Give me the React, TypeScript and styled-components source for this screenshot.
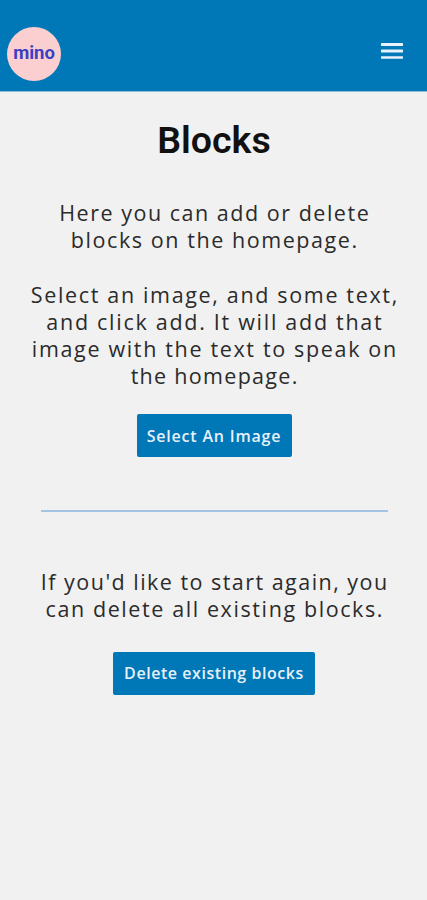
import React, { FunctionComponent } from 'react'
import styled, { createGlobalStyle } from 'styled-components'

const GlobalStyle = createGlobalStyle`
  * {
    box-sizing:border-box;
  }
  body {
    margin:0;
    background:#f1f1f1;
  }
`

const Page = styled.div`
  min-height:900px;
  background:#f1f1f1;
  color:#111;
  font-family:'Open Sans', sans-serif;
`

const Header = styled.header`
  height: 92px;
  display:flex;
  justify-content:space-between;
  align-items:flex-start;
  padding:27px 24px 0 7px;
  background:#0077b6;
  border-bottom:1px solid #8dbfdc;
`

const Logo = styled.div`
  width:54px;
  height:54px;
  border-radius:50%;
  background:#fbcfd0;
  color:#3a3fc4;
  font-family:Roboto, sans-serif;
  font-size:18.5px;
  font-weight:700;
  line-height:52px;
  text-align:center;
`

const MenuButton = styled.button`
  display:block;
  margin-top:16px;
  padding:0;
  border:0;
  background:none;
  line-height:0;
`

const Main = styled.main`
  display:flex;
  flex-direction:column;
  align-items:center;
  padding-left:1px;
`

const Title = styled.h1`
  margin:25px 0 0;
  font-family:Roboto, sans-serif;
  font-size:37.5px;
  font-weight:600;
  line-height:46px;
`

const Paragraph = styled.p<{ $top: number }>`
  margin:${({ $top }) => $top}px 0 0;
  color:#2b2b2b;
  font-size:21.5px;
  font-weight:400;
  line-height:27.2px;
  text-align:center;
  white-space:nowrap;
`

const Line = styled.span<{ $spacing: number }>`
  display:block;
  padding-left:${({ $spacing }) => $spacing}px;
  letter-spacing:${({ $spacing }) => $spacing}px;
`

const Button = styled.button<{ $width: number, $top: number, $spacing: number }>`
  width:${({ $width }) => $width}px;
  height:43px;
  margin:${({ $top }) => $top}px 0 0;
  padding:0;
  border:0;
  border-radius:2px;
  background:#0077b6;
  color:#e6f1fb;
  font-family:'Open Sans', sans-serif;
  font-size:16px;
  font-weight:600;
  letter-spacing:${({ $spacing }) => $spacing}px;
  white-space:nowrap;
`

const Divider = styled.hr`
  width:347px;
  height:2px;
  margin:53px 0 0;
  border:0;
  background:#a3c5e3;
`

type TextLine = {
  text: string,
  spacing: number
}
interface TextBlockProps {
  lines: TextLine[],
  top: number
}

const intro: TextLine[] = [
  { text: 'Here you can add or delete', spacing: 1.52 },
  { text: 'blocks on the homepage.', spacing: 1.57 },
]

const instructions: TextLine[] = [
  { text: 'Select an image, and some text,', spacing: 1.66 },
  { text: 'and click add. It will add that', spacing: 1.72 },
  { text: 'image with the text to speak on', spacing: 1.66 },
  { text: 'the homepage.', spacing: 1.3 },
]

const restart: TextLine[] = [
  { text: 'If you\'d like to start again, you', spacing: 1.47 },
  { text: 'can delete all existing blocks.', spacing: 1.6 },
]

const TextBlock: FunctionComponent<TextBlockProps> = ({ lines, top }) => (
  <Paragraph $top={top}>
    {lines.map(({ text, spacing }) => (
      <Line key={text} $spacing={spacing}>{text}</Line>
    ))}
  </Paragraph>
)

const App: FunctionComponent = () => (
  <Page>
    <GlobalStyle />
    <Header>
      <Logo>mino</Logo>
      <MenuButton aria-label="Menu">
        <svg width="22" height="16" viewBox="0 0 22 16" fill="#e8f1fc">
          <rect width="22" height="3" rx="0.5" />
          <rect y="6.5" width="22" height="3" rx="0.5" />
          <rect y="13.2" width="22" height="2.6" rx="0.5" />
        </svg>
      </MenuButton>
    </Header>
    <Main>
      <Title>Blocks</Title>
      <TextBlock lines={intro} top={36} />
      <TextBlock lines={instructions} top={27.4} />
      <Button $width={155} $top={24.4} $spacing={0.8}>Select An Image</Button>
      <Divider />
      <TextBlock lines={restart} top={56} />
      <Button $width={202} $top={29.2} $spacing={0.55}>Delete existing blocks</Button>
    </Main>
  </Page>
)

export default App
